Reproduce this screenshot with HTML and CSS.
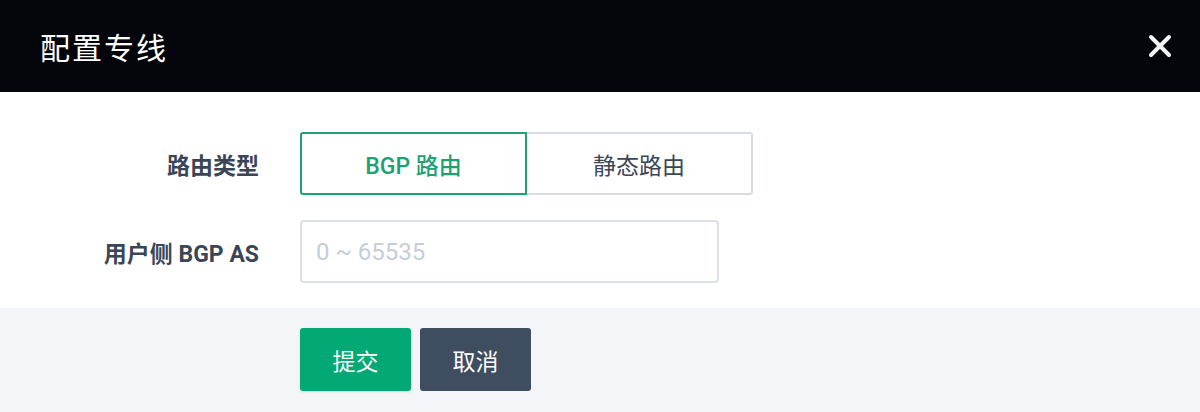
FILE: index.html
```html
<!DOCTYPE html>
<html lang="zh-CN">
<head>
<meta charset="utf-8">
<link rel="stylesheet" href="styles.css">
</head>
<body>
<div class="dialog">
  <header class="head">
    <h1 class="title">配置专线</h1>
    <button class="close" aria-label="关闭">
      <svg width="24" height="24" viewBox="0 0 24 24"><path d="M3 3 L21 21 M21 3 L3 21" stroke="#f3f4f6" stroke-width="4" stroke-linecap="round"/></svg>
    </button>
  </header>
  <main class="body">
    <div class="row">
      <label class="label">路由类型</label>
      <div class="seg">
        <button class="seg-btn active">BGP 路由</button>
        <button class="seg-btn">静态路由</button>
      </div>
    </div>
    <div class="row">
      <label class="label">用户侧 BGP AS</label>
      <input class="input" type="text" placeholder="0 ~ 65535">
    </div>
  </main>
  <footer class="foot">
    <button class="btn primary">提交</button>
    <button class="btn secondary">取消</button>
  </footer>
</div>
</body>
</html>
```
FILE: styles.css
```css
* { box-sizing: border-box; }
html, body { margin: 0; padding: 0; }
body {
  width: 1200px;
  height: 412px;
  overflow: hidden;
  font-family: Roboto, "Noto Sans CJK SC", sans-serif;
  background: #f4f5f8;
}
.dialog { display: flex; flex-direction: column; height: 412px; }
.head {
  height: 92px;
  background: #03050a;
  display: flex;
  align-items: center;
  justify-content: space-between;
  padding: 0 28px 0 40px;
}
.title {
  margin: 0;
  color: #ffffff;
  font-weight: 400;
  font-size: 30px;
  letter-spacing: 2px;
  font-family: "Noto Sans CJK SC", sans-serif;
}
.close {
  background: none;
  border: 0;
  padding: 0;
  width: 24px;
  height: 24px;
  display: flex;
}
.body {
  background: #ffffff;
  padding: 40px 0 25px;
  display: flex;
  flex-direction: column;
  gap: 25px;
}
.row { display: flex; align-items: center; height: 63px; }
.label {
  width: 259px;
  margin-right: 41px;
  text-align: right;
  font-size: 23px;
  font-weight: 700;
  color: #3a4657;
}
.seg { display: flex; height: 63px; }
.seg-btn {
  height: 63px;
  width: 227px;
  background: #ffffff;
  border: 2px solid #d6dce2;
  font-family: Roboto, "Noto Sans CJK SC", sans-serif;
  font-size: 23px;
  color: #3a4657;
  padding: 0;
}
.seg-btn:first-child { border-radius: 3px 0 0 3px; }
.seg-btn:last-child { border-radius: 0 3px 3px 0; border-left: 0; width: 226px; }
.seg-btn.active {
  border-color: #1ea173;
  color: #1ea173;
  font-weight: 500;
}
.input {
  width: 419px;
  height: 63px;
  border: 2px solid #dce1e7;
  border-radius: 4px;
  padding: 0 14px;
  font-family: Roboto, sans-serif;
  font-size: 24px;
  color: #3a4657;
  outline: none;
}
.input::placeholder { color: #c5ced8; }
.foot {
  flex: 1;
  background: #f4f5f8;
  padding: 20px 0 0 300px;
  display: flex;
  gap: 9px;
  align-items: flex-start;
}
.btn {
  width: 111px;
  height: 63px;
  border: 0;
  border-radius: 3px;
  color: #ffffff;
  font-size: 23px;
  font-family: "Noto Sans CJK SC", sans-serif;
  padding: 0;
}
.btn.primary { background: #03a975; box-shadow: 0 1px 3px rgba(0,0,0,0.1); }
.btn.secondary { background: #3f4d60; }
```
